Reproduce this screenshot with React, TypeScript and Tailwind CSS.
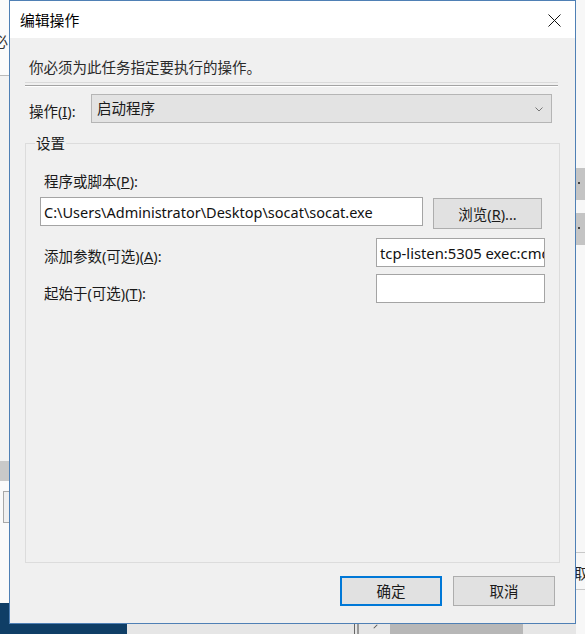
import React from "react";

const FONT = { fontFamily: '"Segoe UI", "Noto Sans", "Noto Sans CJK SC", sans-serif' };

function Btn({ children, primary, className = "" }: { children: React.ReactNode; primary?: boolean; className?: string }) {
  return (
    <div
      className={
        "flex items-center justify-center bg-[#e1e1e1] text-[14.5px] leading-[20px] text-[#1a1a1a] " +
        (primary ? "border-2 border-[#0078d7] " : "border border-[#adadad] ") +
        className
      }
    >
      {children}
    </div>
  );
}

export default function App() {
  return (
    <div className="relative w-[585px] h-[634px] overflow-hidden bg-[#f3f3f3]" style={FONT}>
      {/* background windows (left strip) */}
      <div className="absolute left-0 top-0 w-[10px] h-[75px] bg-[#fbfbfb]" />
      <div className="absolute left-[-7px] top-[31px] text-[15px] leading-[20px] text-[#333]">必</div>
      <div className="absolute left-0 top-[75px] w-[10px] h-[1px] bg-[#b9b9b9]" />
      <div className="absolute left-0 top-[76px] w-[10px] h-[385px] bg-[#f2f2f2]" />
      <div className="absolute left-0 top-[461px] w-[10px] h-[20px] bg-[#c9c9c9]" />
      <div className="absolute left-0 top-[481px] w-[10px] h-[122px] bg-[#fafafa]" />
      <div className="absolute left-[3px] top-[491px] w-[10px] h-[32px] border border-[#a8a8a8] bg-[#f0f0f0]" />
      <div className="absolute left-0 top-[603px] w-[10px] h-[31px] bg-[#0f3e66]" />
      {/* bottom strip */}
      <div className="absolute left-0 top-[624px] w-[127px] h-[10px] bg-[#0f3e66]" />
      <div className="absolute left-[127px] top-[624px] w-[458px] h-[10px] bg-[#e6e6e6]" />
      <div className="absolute left-[354px] top-[624px] w-[1px] h-[10px] bg-[#666]" />
      <div className="absolute left-[357px] top-[624px] w-[2px] h-[10px] bg-[#999]" />
      <div className="absolute left-[373px] top-[626px] w-[5px] h-[1px] bg-[#555] rotate-[-45deg]" />
      <div className="absolute left-[390px] top-[624px] w-[133px] h-[10px] bg-[#b7b7b7]" />
      {/* right strip */}
      <div className="absolute left-[576px] top-0 w-[9px] h-[634px] bg-[#f7f7f7]" />
      <div className="absolute left-[576px] top-[168px] w-[9px] h-[32px] bg-[#c4c4c4]" />
      <div className="absolute left-[578px] top-[182px] w-[2px] h-[2px] bg-[#444]" />
      <div className="absolute left-[576px] top-[213px] w-[9px] h-[32px] bg-[#c4c4c4]" />
      <div className="absolute left-[578px] top-[227px] w-[2px] h-[2px] bg-[#444]" />
      <div className="absolute left-[576px] top-[552px] w-[9px] h-[1px] bg-[#c8c8c8]" />
      <div className="absolute left-[576px] top-[589px] w-[9px] h-[1px] bg-[#c8c8c8]" />
      <div className="absolute left-[574px] top-[563px] text-[14.5px] leading-[20px] text-[#222]">取</div>

      {/* dialog window */}
      <div className="absolute left-[9px] top-0 w-[567px] h-[624px] border border-[#4f80b5] bg-[#f0f0f0] flex flex-col">
        {/* title bar */}
        <div className="h-[37px] bg-white flex items-center justify-between pl-[10px] pr-[14px] shrink-0">
          <span className="text-[14.8px] leading-[20px] text-black">编辑操作</span>
          <svg width="13" height="13" viewBox="0 0 13 13" className="mt-[1px]">
            <path d="M0.5 0.5 L12.5 12.5 M12.5 0.5 L0.5 12.5" stroke="#111" strokeWidth="1" fill="none" />
          </svg>
        </div>

        {/* body */}
        <div className="flex-1 flex flex-col pl-[15px] pr-[17px]">
          <div className="mt-[19px] pl-[4px] text-[14.5px] leading-[20px] text-[#2a2a2a]">你必须为此任务指定要执行的操作。</div>
          <div className="mt-[5px] h-[1px] bg-[#dadada]" />
          <div className="mt-[2px] h-[1px] bg-[#a3a3a3]" />
          <div className="h-[1px] bg-white" />

          {/* operation row */}
          <div className="mt-[7px] flex items-start pl-[4px] pr-[6px]">
            <span className="mt-[7px] text-[14.5px] leading-[20px] text-[#1a1a1a] w-[62px]">
              操作(<u>I</u>):
            </span>
            <div className="h-[29px] w-[461px] bg-[#e3e3e3] border border-[#b5b5b5] flex items-center justify-between pl-[5px] pr-[8px]">
              <span className="text-[14.5px] leading-[20px] text-[#1a1a1a] -mt-[1px]">启动程序</span>
              <svg width="8" height="5" viewBox="0 0 8 5" className="mt-[2px]">
                <path d="M0.5 0.5 L4 4 L7.5 0.5" stroke="#777" strokeWidth="1" fill="none" />
              </svg>
            </div>
          </div>

          {/* group box */}
          <fieldset className="mt-[10px] w-[535px] h-[430px] border border-[#dcdcdc] pl-[14px] pr-[14px]">
            <legend className="-ml-[5px] px-[1px] text-[14.5px] leading-[20px] text-[#1a1a1a]">设置</legend>

            <div className="mt-[18px] pl-[4px] text-[14.5px] leading-[20px] text-[#1a1a1a]">
              程序或脚本(<u>P</u>):
            </div>
            <div className="mt-[6px] flex items-start gap-[10px]">
              <div className="h-[29px] w-[383px] bg-white border border-[#a4a4a4] flex items-center pl-[3px] overflow-hidden whitespace-nowrap">
                <span className="text-[14.5px] leading-[20px] text-[#111]">
                  C:\Users\Administrator\Desktop\socat\socat.exe
                </span>
              </div>
              <Btn className="mt-[1px] h-[31px] w-[109px]">
                浏览(<u>R</u>)...
              </Btn>
            </div>

            <div className="mt-[9px] flex items-start justify-between">
              <span className="mt-[8px] pl-[4px] text-[14.5px] leading-[20px] text-[#1a1a1a]">
                添加参数(可选)(<u>A</u>):
              </span>
              <div className="h-[29px] w-[169px] bg-white border border-[#a4a4a4] flex items-center pl-[3px] overflow-hidden whitespace-nowrap">
                <span className="text-[14.8px] leading-[20px] text-[#111]">tcp-listen:5305 exec:cmd.exe,pipes</span>
              </div>
            </div>

            <div className="mt-[7px] flex items-start justify-between">
              <span className="mt-[9px] pl-[4px] text-[14.5px] leading-[20px] text-[#1a1a1a]">
                起始于(可选)(<u>T</u>):
              </span>
              <div className="h-[29px] w-[169px] bg-white border border-[#a4a4a4]" />
            </div>
          </fieldset>

          {/* buttons */}
          <div className="mt-[13px] flex justify-end gap-[11px] pr-[3px]">
            <Btn primary className="h-[30px] w-[102px]">确定</Btn>
            <Btn className="h-[30px] w-[102px]">取消</Btn>
          </div>
        </div>
      </div>
    </div>
  );
}
